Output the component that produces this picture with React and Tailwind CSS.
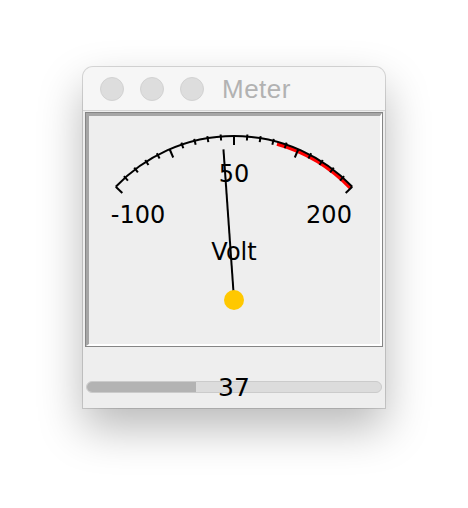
import React from "react";

const CX = 234;
const CY = 299;
const R = 163;
const SPAN = 46.5;

const pt = (deg, r) => {
    const a = (deg * Math.PI) / 180;
    return [CX + r * Math.sin(a), CY - r * Math.cos(a)];
};

const valueToDeg = (v) => ((v - 50) / 150) * SPAN;

const Gauge = ({ value }) => {
    const ticks = [];
    for (let i = 0; i <= 20; i++) {
        const deg = ((i - 10) / 10) * SPAN;
        let outer = R + 2;
        let inner = R - 4;
        if (i % 10 === 0) {
            outer = R;
            inner = R - 9;
        } else if (i % 5 === 0) {
            outer = R;
            inner = R - 9;
        }
        const [x1, y1] = pt(deg, outer);
        const [x2, y2] = pt(deg, inner);
        ticks.push(<line key={i} x1={x1} y1={y1} x2={x2} y2={y2} stroke="black" strokeWidth="2" />);
    }
    const [ax, ay] = pt(-SPAN, R);
    const [bx, by] = pt(SPAN, R);
    const [rx1, ry1] = pt(valueToDeg(100), R - 2);
    const [rx2, ry2] = pt(SPAN, R - 2);
    const [nx, ny] = pt(valueToDeg(value), 150);

    return (
        <svg width="291" height="228" viewBox="89 116 291 228" className="block">
            <path d={`M ${rx1} ${ry1} A ${R - 2} ${R - 2} 0 0 1 ${rx2} ${ry2}`} fill="none" stroke="#ff0000" strokeWidth="4" />
            <path d={`M ${ax} ${ay} A ${R} ${R} 0 0 1 ${bx} ${by}`} fill="none" stroke="black" strokeWidth="2" />
            {ticks}
            <g fontFamily="'DejaVu Sans', sans-serif" fontSize="24" fill="black" textAnchor="middle">
                <text x="138" y="223">-100</text>
                <text x="234" y="182">50</text>
                <text x="329" y="223">200</text>
                <text x="234" y="260">Volt</text>
            </g>
            <line x1={CX} y1={CY} x2={nx} y2={ny} stroke="black" strokeWidth="2" />
            <circle cx="234" cy="300" r="10" fill="#ffc800" />
        </svg>
    );
};

const App = () => {
    const value = 37;
    return (
        <div className="w-[468px] h-[508px] bg-white pt-[67px] pl-[83px]">
            <div className="w-[302px] h-[341px] bg-[#eeeeee] rounded-t-[10px] flex flex-col shadow-[0_0_0_1px_rgba(0,0,0,0.14),0_20px_45px_rgba(0,0,0,0.28)]">
                <div className="h-[44px] shrink-0 bg-[#f6f6f6] rounded-t-[10px] border-b border-[#d4d4d4] flex items-center pl-[17px]">
                    <div className="flex gap-[16px]">
                        <span className="w-[24px] h-[24px] rounded-full bg-[#dddddd] border border-[#d2d2d2]"></span>
                        <span className="w-[24px] h-[24px] rounded-full bg-[#dddddd] border border-[#d2d2d2]"></span>
                        <span className="w-[24px] h-[24px] rounded-full bg-[#dddddd] border border-[#d2d2d2]"></span>
                    </div>
                    <span className="ml-[18px] text-[26px] leading-none tracking-[0.5px] text-[#b2b2b2] font-['Liberation_Sans',sans-serif]">Meter</span>
                </div>
                <div className="mx-[2px] mt-[1px] w-[298px] h-[235px] border border-[#858585]">
                    <div className="border-t-[3px] border-l-[3px] border-r-2 border-b-2 border-t-[#a6a6a6] border-l-[#a6a6a6] border-r-white border-b-white bg-[#eeeeee]">
                        <Gauge value={value} />
                    </div>
                </div>
                <div className="mt-[34px] mx-[3px] relative h-[12px]">
                    <div className="h-[12px] rounded-full bg-[#dcdcdc] border border-[#cbcbcb] overflow-hidden">
                        <div className="h-full bg-[#b3b3b3]" style={{ width: `${value}%` }}></div>
                    </div>
                    <span className="absolute inset-0 flex items-center justify-center text-[25px] leading-none text-black font-['DejaVu_Sans',sans-serif]">{value}</span>
                </div>
            </div>
        </div>
    );
};

export default App;
